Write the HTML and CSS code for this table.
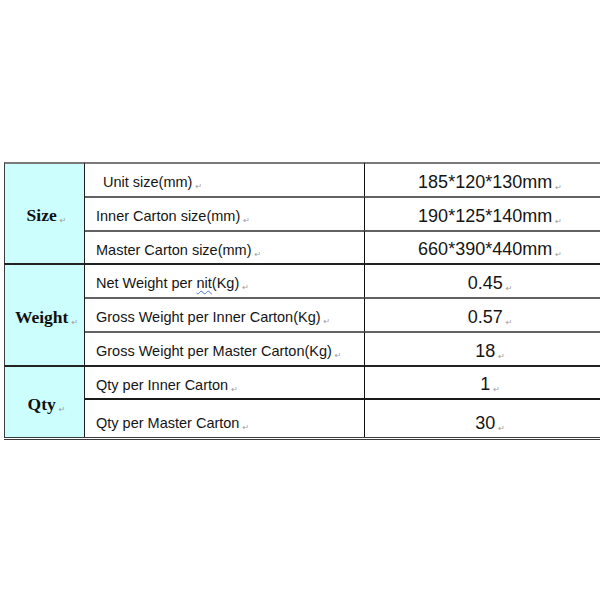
FILE: index.html
```html
<!DOCTYPE html>
<html>
<head>
<meta charset="utf-8">
<link rel="stylesheet" href="styles.css">
</head>
<body>
<div class="page">
  <div class="spec">
    <div class="group group-first"><span><span class="gname">Size</span><span class="pm">↵</span></span></div>
    <div class="lbl lbl-first lbl-indent"><span>Unit size(mm)<span class="pm">↵</span></span></div>
    <div class="val val-first"><span>185*120*130mm<span class="pm">↵</span></span></div>
    <div class="lbl"><span>Inner Carton size(mm)<span class="pm">↵</span></span></div>
    <div class="val"><span>190*125*140mm<span class="pm">↵</span></span></div>
    <div class="lbl"><span>Master Carton size(mm)<span class="pm">↵</span></span></div>
    <div class="val"><span>660*390*440mm<span class="pm">↵</span></span></div>

    <div class="group"><span><span class="gname">Weight</span><span class="pm">↵</span></span></div>
    <div class="lbl lbl-group"><span>Net Weight per <span class="typo">nit</span>(Kg)<span class="pm">↵</span></span></div>
    <div class="val val-group"><span>0.45<span class="pm">↵</span></span></div>
    <div class="lbl"><span>Gross Weight per Inner Carton(Kg)<span class="pm">↵</span></span></div>
    <div class="val"><span>0.57<span class="pm">↵</span></span></div>
    <div class="lbl"><span>Gross Weight per Master Carton(Kg)<span class="pm">↵</span></span></div>
    <div class="val"><span>18<span class="pm">↵</span></span></div>

    <div class="group group-short"><span><span class="gname">Qty</span><span class="pm">↵</span></span></div>
    <div class="lbl lbl-group"><span>Qty per Inner Carton<span class="pm">↵</span></span></div>
    <div class="val val-group"><span>1<span class="pm">↵</span></span></div>
    <div class="lbl lbl-last"><span>Qty per Master Carton<span class="pm">↵</span></span></div>
    <div class="val lbl-last"><span>30<span class="pm">↵</span></span></div>
  </div>
</div>
</body>
</html>
```

FILE: styles.css
```css
html, body {
  margin: 0;
  padding: 0;
  background: #ffffff;
}

.page {
  padding: 162px 0 0 4px;
  width: 596px;
  overflow: hidden;
}

.spec {
  display: grid;
  grid-template-columns: 81px 280px 1fr;
  grid-template-rows: 34px 34px 33px 34px 34px 34px 33px 39px;
  border-bottom: 3px double #3a3a3a;
  font-family: "Liberation Sans", Arial, sans-serif;
  color: #151515;
}

.spec > div {
  box-sizing: border-box;
  display: flex;
  align-items: center;
  padding-top: 4px;
  white-space: pre;
}

.group {
  grid-row: span 3;
  background: #ccfefe;
  border-left: 1px solid #3c3c3c;
  border-right: 1px solid #1e1e1e;
  border-top: 2px solid #222;
  justify-content: center;
  padding-left: 4px;
}

.group-first {
  border-top: 2px solid #7a7a7a;
}

.spec > .group-short {
  grid-row: span 2;
}

.gname {
  font-family: "Liberation Serif", "Times New Roman", serif;
  font-weight: bold;
  font-size: 17.5px;
  color: #101010;
}

.lbl {
  font-size: 14.5px;
  padding-left: 11px;
  border-top: 2px solid #626262;
  border-right: 1px solid #111;
}

.spec > .lbl-indent {
  padding-left: 18px;
}

.val {
  font-size: 18px;
  justify-content: center;
  border-top: 2px solid #626262;
  padding-left: 15px;
}

.spec > .lbl-first, .spec > .val-first {
  border-top: 2px solid #7a7a7a;
}

.spec > .lbl-group, .spec > .val-group {
  border-top: 2px solid #222;
}

.spec > .lbl-last {
  border-top: 2px solid #1a1a1a;
  padding-top: 9px;
}

.pm {
  font-family: "DejaVu Sans", sans-serif;
  font-size: 8px;
  color: #9c9c9c;
  margin-left: 3px;
  position: relative;
  top: 2px;
}

.typo {
  text-decoration: underline wavy #4a78d6;
  text-decoration-thickness: 1px;
  text-underline-offset: 2px;
}
```
